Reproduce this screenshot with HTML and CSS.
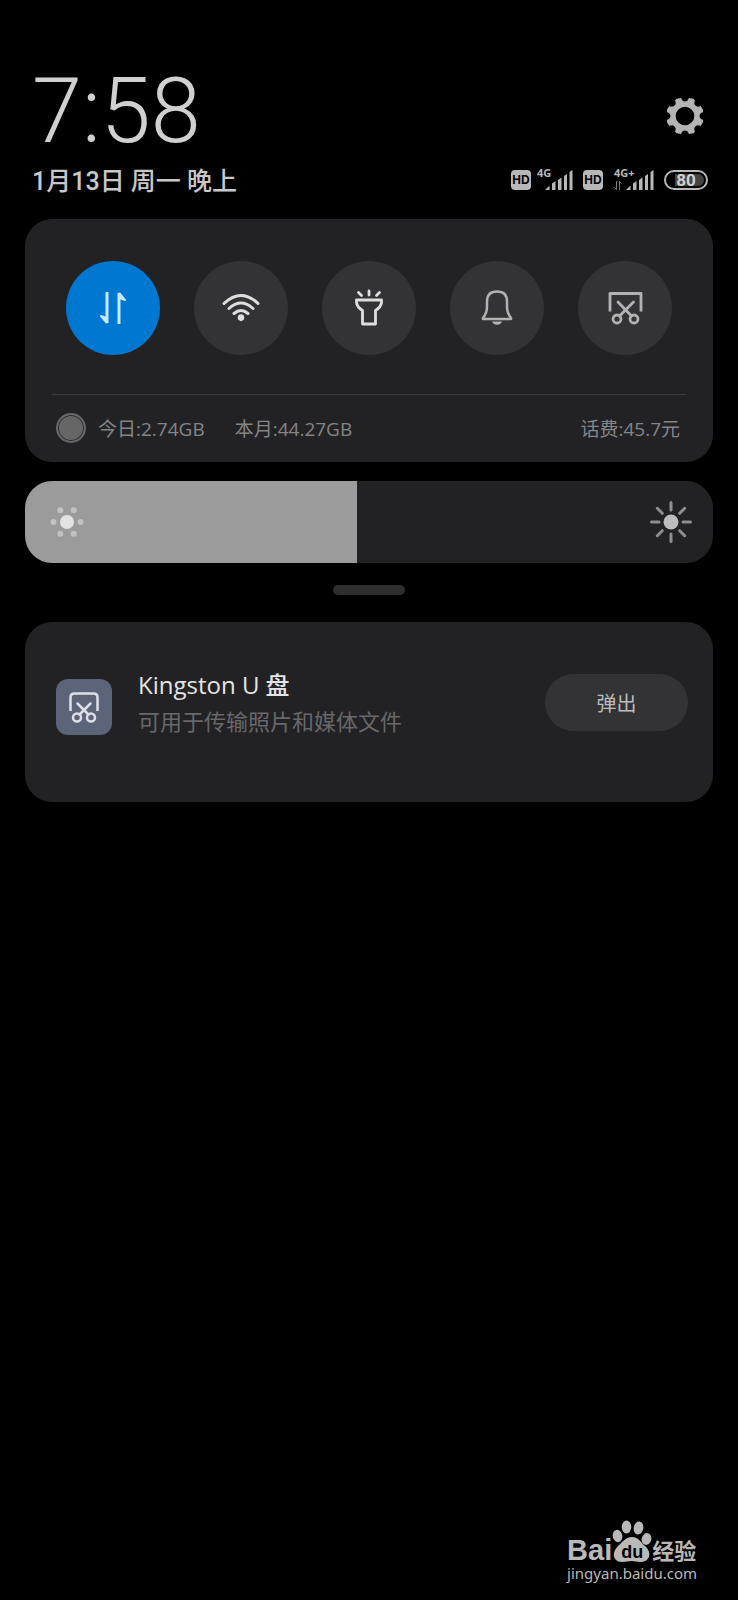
FILE: index.html
```html
<!DOCTYPE html>
<html lang="zh-CN">
<head>
    <meta charset="UTF-8">
    <meta name="viewport" content="width=device-width, initial-scale=1.0">
    <title>通知栏</title>
    <link rel="stylesheet" href="styles.css">
</head>
<body>
    <div class="shade">
        <header class="header">
            <div class="header-row">
                <div class="clock">7:58</div>
                <button class="settings" aria-label="设置">
                    <svg width="36" height="36" viewBox="-18 -18 36 36" fill="#b4b4b4">
                        <path fill-rule="evenodd" d="M-8.500-17.300L-3.800-18C-3.200-15.500-1.800-14.600 0-14.600S3.200-15.500 3.800-18L8.500-17.300L10-15.600C8.900-13.300 9.200-11.700 10.400-10.400S13.300-8.900 15.600-10L17.900-6.500L18-3.800C15.500-3.200 14.600-1.800 14.600 0S15.500 3.200 18 3.800L17.900 6.500L15.600 10C13.300 8.900 11.700 9.200 10.400 10.400S8.900 13.300 10 15.600L8.500 17.300L3.800 18C3.200 15.500 1.800 14.600 0 14.600S-3.200 15.500-3.800 18L-8.500 17.300L-10 15.600C-8.900 13.300-9.200 11.700-10.400 10.400S-13.300 8.900-15.600 10L-17.900 6.500L-18 3.800C-15.500 3.200-14.600 1.800-14.600 0S-15.500-3.200-18-3.800L-17.900-6.500L-15.600-10C-13.300-8.900-11.700-9.200-10.400-10.400S-8.900-13.300-10-15.600ZM0-9.300A9.300 9.300 0 1 0 0 9.300A9.300 9.300 0 1 0 0-9.300Z"/>
                    </svg>
                </button>
            </div>
            <div class="header-row">
                <div class="date">1月13日 周一 晚上</div>
                <div class="status">
                    <span class="hd">HD</span>
                    <span class="signal">
                        <span class="net">4G</span>
                        <svg class="bars" width="28" height="20" viewBox="0 0 28 20" fill="#b8b8b8">
                            <path d="M0 20L4.500 15.500V20ZM7 13.500L10.500 11V20H7ZM13 10L16.500 7.500V20H13ZM19 6L22 4V20H19ZM24.500 2L27.500 0V20H24.500Z"/>
                        </svg>
                    </span>
                    <span class="hd">HD</span>
                    <span class="signal wide">
                        <span class="net">4G+</span>
                        <svg class="data" width="8" height="9" viewBox="0 0 8 9" fill="none" stroke="#777">
                            <path d="M2.500 0V8.500L.5 6.500M5.500 9V.5L7.500 2.500"/>
                        </svg>
                        <svg class="bars" width="28" height="20" viewBox="0 0 28 20" fill="#b8b8b8">
                            <path d="M0 20L4.500 15.500V20ZM7 13.500L10.500 11V20H7ZM13 10L16.500 7.500V20H13ZM19 6L22 4V20H19ZM24.500 2L27.500 0V20H24.500Z"/>
                        </svg>
                    </span>
                    <span class="battery"><span class="level">80</span></span>
                </div>
            </div>
        </header>

        <main>
            <section class="card toggles">
                <div class="toggle-row">
                    <button class="toggle on" aria-label="移动数据">
                        <svg width="40" height="40" viewBox="0 0 40 40" fill="none" stroke="#c4e8ff" stroke-width="3" stroke-linejoin="round">
                            <path d="M14 4V35M26 36V5"/>
                            <path d="M13.500 34.500L8 28L13.500 30ZM26.500 5.500L32 12L26.500 10Z" fill="#c4e8ff" stroke-width="2"/>
                        </svg>
                    </button>
                    <button class="toggle" aria-label="WLAN">
                        <svg width="40" height="40" viewBox="0 0 40 40" fill="none" stroke="#dedede" stroke-width="3" stroke-linecap="round">
                            <path d="M3 15.500Q20-.5 37 15.500M8 20.500Q20 9.500 32 20.500M13 25.500Q20 19.500 27 25.500"/>
                            <path d="M20 33.500L16.500 30Q20 25 23.500 30Z" fill="#dedede" stroke="none"/>
                            <circle cx="20" cy="29.500" r="3.200" fill="#dedede" stroke="none"/>
                        </svg>
                    </button>
                    <button class="toggle" aria-label="手电筒">
                        <svg width="40" height="40" viewBox="0 0 40 40" fill="none" stroke="#dedede" stroke-width="2.800" stroke-linecap="round" stroke-linejoin="round">
                            <path d="M7.500 12H32.500V14.500Q32 19 26.500 22.500V36H13.500V22.500Q8 19 7.500 14.500Z"/>
                            <path d="M20 3V7M9.500 4.500L12.500 7.500M30.500 4.500L27.500 7.500"/>
                        </svg>
                    </button>
                    <button class="toggle" aria-label="静音">
                        <svg width="40" height="40" viewBox="0 0 40 40" fill="none" stroke="#b2b2b2" stroke-width="2.500" stroke-linejoin="round">
                            <path d="M6 30Q10 25 10 19V13.500Q10 3.500 20 3.500T30 13.500V19Q30 25 34 30Q34.500 31 33 31H7Q5.500 31 6 30Z"/>
                            <path d="M15 33.500H25Q23.500 36.800 20 36.800T15 33.500Z" fill="#b2b2b2" stroke="none"/>
                        </svg>
                    </button>
                    <button class="toggle" aria-label="截屏">
                        <svg width="40" height="40" viewBox="0 0 40 40" fill="none" stroke="#b2b2b2" stroke-width="2.800" stroke-linejoin="round" stroke-linecap="round">
                            <path d="M5 23.500V5.500H36V23.500" stroke-linecap="butt"/>
                            <circle cx="12" cy="31" r="4"/>
                            <circle cx="29" cy="31" r="4"/>
                            <path d="M13 14L26.500 28M28.500 14L14.500 28"/>
                        </svg>
                    </button>
                </div>
                <div class="usage">
                    <span class="dot"></span>
                    <span class="today">今日:2.74GB</span>
                    <span>本月:44.27GB</span>
                    <span class="balance">话费:45.7元</span>
                </div>
            </section>

            <div class="brightness">
                <input type="range" min="0" max="100" value="48" aria-label="亮度">
                <svg class="sun" width="34" height="34" viewBox="-17 -17 34 34">
                    <circle r="7" fill="#e2e2e2"/>
                    <g fill="#c2c2c2">
                        <circle cx="-13.500" r="3"/><circle cx="13.500" r="3"/>
                        <circle cx="-6.700" cy="-11.700" r="3"/><circle cx="6.700" cy="-11.700" r="3"/>
                        <circle cx="-6.700" cy="11.700" r="3"/><circle cx="6.700" cy="11.700" r="3"/>
                    </g>
                </svg>
                <svg class="sun right" width="42" height="42" viewBox="-21 -21 42 42">
                    <circle r="7.500" fill="#bcbcbe"/>
                    <path d="M0-19.500V-12M0 19.500V12M-19.500 0H-12M19.500 0H12M-13.700-13.700L-8.700-8.700M13.700-13.700L8.700-8.700M-13.700 13.700L-8.700 8.700M13.700 13.700L8.700 8.700" stroke="#8e8e90" stroke-width="3" stroke-linecap="round"/>
                </svg>
            </div>

            <div class="handle"></div>

            <section class="card notice">
                <div class="app-icon">
                    <svg width="32" height="32" viewBox="0 0 32 32" fill="none" stroke="#dcdfe8" stroke-width="2.500" stroke-linecap="round">
                        <path d="M2.500 20V6.500Q2.500 2.500 6.500 2.500H25.500Q29.500 2.500 29.500 6.500V20" stroke-linecap="butt"/>
                        <circle cx="9" cy="26.500" r="4"/>
                        <circle cx="23" cy="26.500" r="4"/>
                        <path d="M9.500 12.500L20.500 23.500M22.500 12.500L11.500 23.500"/>
                    </svg>
                </div>
                <div class="notice-text">
                    <div class="title">Kingston U 盘</div>
                    <div class="desc">可用于传输照片和媒体文件</div>
                </div>
                <button class="eject">弹出</button>
            </section>
        </main>

        <footer class="watermark">
            <div class="logo">
                <span class="bai">Bai</span>
                <span class="paw">
                    <svg width="40" height="42" viewBox="0 0 40 42" fill="#b9b9b9">
                        <ellipse cx="5.500" cy="16" rx="4.800" ry="6.200" transform="rotate(-12 5.500 16)"/>
                        <ellipse cx="14.500" cy="7" rx="4.800" ry="6.500"/>
                        <ellipse cx="26.500" cy="8" rx="4.800" ry="6.500" transform="rotate(10 26.500 8)"/>
                        <ellipse cx="34.500" cy="19" rx="4.800" ry="6" transform="rotate(12 34.500 19)"/>
                        <path d="M20 17C27 17 29 23 33 26C41 33 37 42 29 42C25 42 23 41 19.500 41S14 42 10 42C1 42-1 33 6 26C10 23 13 17 20 17Z"/>
                    </svg>
                    <span class="du">du</span>
                </span>
                <span class="jy">经验</span>
            </div>
            <div class="url">jingyan.baidu.com</div>
        </footer>
    </div>
</body>
</html>
```
FILE: styles.css
```css
* {
    box-sizing: border-box;
}
body {
    margin: 0;
    background: #000;
    color: #c8c8c8;
    font-family: "Open Sans", "Noto Sans CJK SC", sans-serif;
}
button {
    border: 0;
    padding: 0;
    font-family: inherit;
    cursor: pointer;
}
svg {
    display: block;
}
.shade {
    display: flex;
    flex-direction: column;
    min-height: 100vh;
    padding: 66px 25px 16px;
}

/* 时间和状态栏 */
.header {
    padding: 0 5px 0 7px;
}
.header-row {
    display: flex;
    justify-content: space-between;
    align-items: center;
}
.clock {
    font-family: Roboto, sans-serif;
    font-size: 90px;
    line-height: 92px;
    font-weight: 300;
    color: #d0d0d0;
}
.settings {
    background: none;
    margin: 8px 5px 0 0;
}
.date {
    font-family: Roboto, "Noto Sans CJK SC", sans-serif;
    font-size: 25px;
    line-height: 48px;
    font-weight: 500;
}
.status {
    display: flex;
    align-items: center;
    margin-bottom: 4px;
    color: #b8b8b8;
}
.hd {
    width: 20px;
    height: 20px;
    border-radius: 4px;
    background: #b8b8b8;
    color: #000;
    font: bold 12px/20px "Liberation Sans", sans-serif;
    text-align: center;
}
.signal {
    display: flex;
    align-items: flex-end;
    position: relative;
    justify-content: flex-end;
    width: 36px;
    height: 20px;
    margin: 0 10px 0 6px;
}
.signal.wide {
    justify-content: space-between;
    width: 40px;
    margin-left: 11px;
}
.net {
    position: absolute;
    left: 0;
    top: -3px;
    font: bold 11px/12px "Noto Sans", sans-serif;
}
.battery {
    width: 44px;
    height: 20px;
    padding: 2px;
    border: 2px solid #b8b8b8;
    border-radius: 10px;
}
.level {
    display: block;
    height: 12px;
    border-radius: 6px;
    background: linear-gradient(90deg, #000 20%, #444 20%);
    color: #d0d0d0;
    font: bold 17px/12px Roboto, sans-serif;
    text-align: center;
}

.card {
    background: #222224;
    border-radius: 27px;
}

/* 快捷开关 */
.toggles {
    margin-top: 13px;
    padding: 42px 27px 0;
}
.toggle-row {
    display: flex;
    justify-content: space-between;
    padding: 0 14px 39px;
    border-bottom: 1px solid #3c3c3e;
}
.toggle {
    display: flex;
    align-items: center;
    justify-content: center;
    width: 94px;
    height: 94px;
    border-radius: 50%;
    background: #333335;
}
.toggle.on {
    background: #0077d0;
}
.usage {
    display: flex;
    align-items: center;
    height: 67px;
    padding: 0 6px 2px 4px;
    font-size: 19px;
    color: #858587;
}
.dot {
    width: 30px;
    height: 30px;
    margin-right: 12px;
    border: 2px solid #666;
    border-radius: 50%;
    background: #666;
    box-shadow: inset 0 0 0 1px #2c2c2e;
}
.today {
    margin-right: 30px;
}
.balance {
    margin-left: auto;
}

/* 亮度条 */
.brightness {
    position: relative;
    margin-top: 19px;
}
.brightness input {
    appearance: none;
    display: block;
    width: 100%;
    height: 82px;
    margin: 0;
    border-radius: 27px;
    background: linear-gradient(90deg, #9b9b9b 48.3%, #222224 48.3%);
}
.brightness input::-webkit-slider-thumb {
    appearance: none;
    width: 20px;
    height: 82px;
}
.sun {
    position: absolute;
    left: 25px;
    top: 24px;
    pointer-events: none;
}
.sun.right {
    left: auto;
    right: 21px;
    top: 20px;
}
.handle {
    width: 72px;
    height: 10px;
    margin: 22px auto 27px;
    border-radius: 5px;
    background: #2e2e2e;
}

/* 通知 */
.notice {
    display: flex;
    align-items: center;
    min-height: 180px;
    padding: 0 25px 0 31px;
}
.app-icon {
    display: flex;
    align-items: center;
    justify-content: center;
    width: 56px;
    height: 56px;
    margin: 0 26px 10px 0;
    border-radius: 12px;
    background: #5c647a;
}
.notice-text {
    flex: 1;
    line-height: 36px;
    padding-bottom: 18px;
}
.title {
    font-size: 24px;
    font-weight: 500;
    color: #e4e4e4;
}
.desc {
    font-size: 22px;
    color: #68686a;
}
.eject {
    width: 143px;
    height: 57px;
    margin-bottom: 20px;
    border-radius: 29px;
    background: #333335;
    color: #bcbcbe;
    font-size: 20px;
}

/* 水印 */
.watermark {
    align-self: flex-end;
    margin: auto 16px 0 0;
    color: #b9b9b9;
}
.logo {
    display: flex;
    align-items: flex-end;
}
.bai {
    font: bold 29px/24px "Liberation Sans", sans-serif;
}
.paw {
    position: relative;
}
.du {
    position: absolute;
    left: 0;
    right: 0;
    bottom: 1px;
    color: #000;
    font: bold 18px/18px "Liberation Sans", sans-serif;
    text-align: center;
}
.jy {
    font-size: 22px;
    line-height: 24px;
    font-weight: 700;
}
.url {
    font: 15px/22px "Noto Sans", sans-serif;
}
```
